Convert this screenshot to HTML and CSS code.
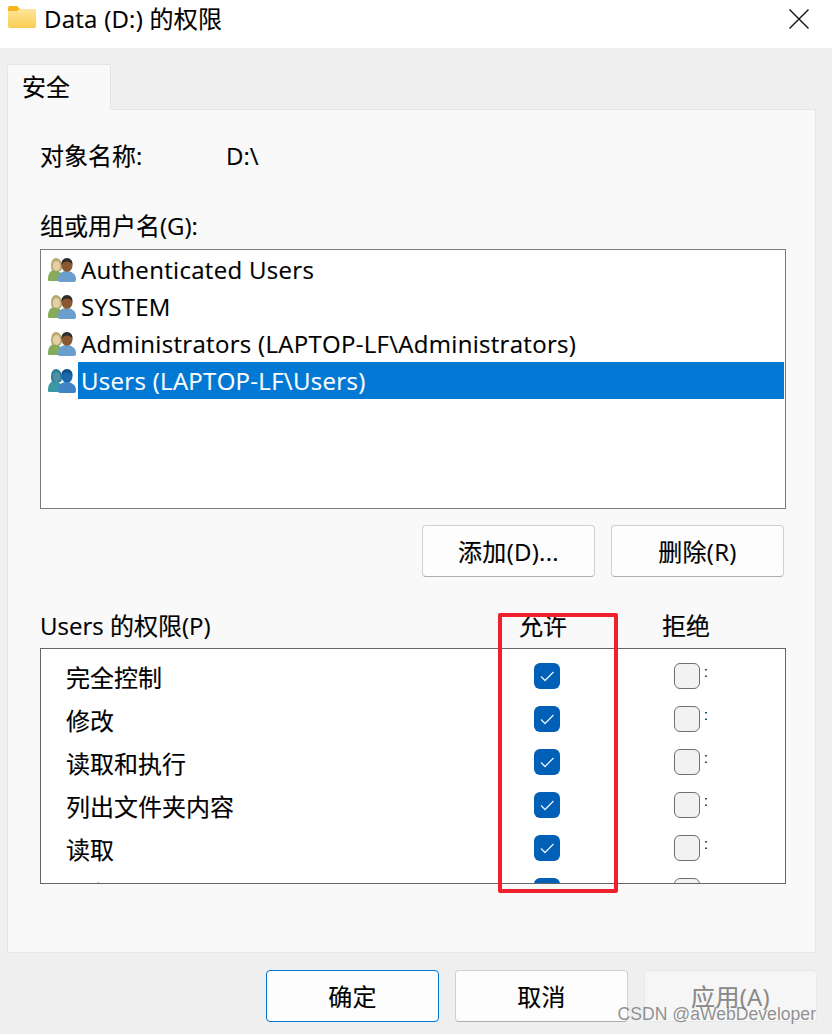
FILE: index.html
```html
<!DOCTYPE html>
<html lang="zh-CN">
<head>
<meta charset="utf-8">
<title>Data (D:) 的权限</title>
<link rel="stylesheet" href="styles.css">
</head>
<body>
<svg class="defs" width="0" height="0" aria-hidden="true">
  <defs>
    <symbol id="people" viewBox="0 0 28 24">
      <path d="M0 21c0-6 3-9 7-9 4 0 7 3 7 9v2H1a1 1 0 0 1-1-1z" fill="#86ab5a"/>
      <path d="M3 8c0-5 2-8 5-8s6 3 6 8c0 2.500-.5 4-1.500 5H4.500C3.500 12 3 10.500 3 8z" fill="#b8a874"/>
      <ellipse cx="8.500" cy="8" rx="3.800" ry="5" fill="#e6cfa6"/>
      <path d="M10 22v-1c0-5 3.500-8 8.500-8S28 16 28 21v1a2 2 0 0 1-2 2H12a2 2 0 0 1-2-2z" fill="#6a9ecd"/>
      <ellipse cx="19" cy="7.500" rx="5.500" ry="6.300" fill="#8a5731"/>
      <path d="M13.500 7c-.5-4 2-7 5.500-7s6 3 5.500 7c-1-2-3-3.500-5.500-3.500S14.500 5 13.500 7z" fill="#2e2d2c"/>
    </symbol>
    <symbol id="people-sel" viewBox="0 0 28 24">
      <path d="M0 21c0-6 3-9 7-9 4 0 7 3 7 9v2H1a1 1 0 0 1-1-1z" fill="#3a98a3"/>
      <path d="M3 8c0-5 2-8 5-8s6 3 6 8c0 2.500-.5 4-1.500 5H4.500C3.500 12 3 10.500 3 8z" fill="#2e7d96"/>
      <ellipse cx="8.500" cy="8" rx="3.800" ry="5" fill="#4f8fa8"/>
      <path d="M10 22v-1c0-5 3.500-8 8.500-8S28 16 28 21v1a2 2 0 0 1-2 2H12a2 2 0 0 1-2-2z" fill="#3e84c6"/>
      <ellipse cx="19" cy="7.500" rx="5.500" ry="6.300" fill="#1b69ab"/>
      <path d="M13.500 7c-.5-4 2-7 5.500-7s6 3 5.500 7c-1-2-3-3.500-5.500-3.500S14.500 5 13.500 7z" fill="#0f4f8c"/>
    </symbol>
    <symbol id="tick" viewBox="0 0 26 26">
      <path d="M7 13.500l4 4L19.500 9" fill="none" stroke="#e8f1fa" stroke-width="1.300"/>
    </symbol>
  </defs>
</svg>
<div class="dialog">
  <header class="titlebar">
    <svg class="folder" viewBox="0 0 28 22" aria-hidden="true">
      <defs>
        <linearGradient id="fold" x1="0" y1="0" x2="0" y2="1">
          <stop offset="0" stop-color="#fde59b"/>
          <stop offset="1" stop-color="#f9cd52"/>
        </linearGradient>
      </defs>
      <path d="M0 2a2 2 0 0 1 2-2h7l3 3h14a2 2 0 0 1 2 2v3H0z" fill="#f6b51e"/>
      <path d="M0 5h9l3-2h14a2 2 0 0 1 2 2v15a2 2 0 0 1-2 2H2a2 2 0 0 1-2-2z" fill="url(#fold)"/>
    </svg>
    <span class="title">Data (D:) 的权限</span>
    <svg class="close" viewBox="0 0 20 20" aria-hidden="true">
      <path d="M0.500 0.500l19 19M19.500 0.500l-19 19" fill="none" stroke="#111" stroke-width="1.400"/>
    </svg>
  </header>

  <main class="body">
    <div class="tabs"><div class="tab">安全</div></div>
    <section class="panel">
      <div class="object"><span class="object-label">对象名称:</span><span>D:\</span></div>
      <div class="group-label">组或用户名(G):</div>
      <ul class="users">
        <li class="user"><svg class="user-icon"><use href="#people"/></svg><span class="user-name">Authenticated Users</span></li>
        <li class="user"><svg class="user-icon"><use href="#people"/></svg><span class="user-name">SYSTEM</span></li>
        <li class="user"><svg class="user-icon"><use href="#people"/></svg><span class="user-name">Administrators (LAPTOP-LF\Administrators)</span></li>
        <li class="user selected"><svg class="user-icon"><use href="#people-sel"/></svg><span class="user-name">Users (LAPTOP-LF\Users)</span></li>
      </ul>
      <div class="user-actions">
        <button class="btn">添加(D)...</button>
        <button class="btn">删除(R)</button>
      </div>
      <div class="perm-head">
        <span class="perm-title">Users 的权限(P)</span>
        <span class="perm-col">允许</span>
        <span class="perm-col">拒绝</span>
      </div>
      <div class="perms">
        <div class="perm-rows">
          <div class="perm"><span class="perm-name">完全控制</span><span class="cell"><span class="box on"><svg><use href="#tick"/></svg></span></span><span class="cell"><span class="box"></span><span class="dots">:</span></span></div>
          <div class="perm"><span class="perm-name">修改</span><span class="cell"><span class="box on"><svg><use href="#tick"/></svg></span></span><span class="cell"><span class="box"></span><span class="dots">:</span></span></div>
          <div class="perm"><span class="perm-name">读取和执行</span><span class="cell"><span class="box on"><svg><use href="#tick"/></svg></span></span><span class="cell"><span class="box"></span><span class="dots">:</span></span></div>
          <div class="perm"><span class="perm-name">列出文件夹内容</span><span class="cell"><span class="box on"><svg><use href="#tick"/></svg></span></span><span class="cell"><span class="box"></span><span class="dots">:</span></span></div>
          <div class="perm"><span class="perm-name">读取</span><span class="cell"><span class="box on"><svg><use href="#tick"/></svg></span></span><span class="cell"><span class="box"></span><span class="dots">:</span></span></div>
          <div class="perm"><span class="perm-name">写入</span><span class="cell"><span class="box on"><svg><use href="#tick"/></svg></span></span><span class="cell"><span class="box"></span><span class="dots">:</span></span></div>
        </div>
        <div class="scrollbar"><div class="thumb"></div></div>
      </div>
    </section>
  </main>

  <footer class="footer">
    <button class="btn primary">确定</button>
    <button class="btn">取消</button>
    <button class="btn disabled">应用(A)</button>
  </footer>
</div>
<div class="highlight"></div>
<div class="watermark">CSDN @aWebDeveloper</div>
</body>
</html>
```
FILE: styles.css
```css
* { box-sizing: border-box; }
html, body { margin: 0; padding: 0; }
body {
  width: 832px;
  height: 1034px;
  overflow: hidden;
  position: relative;
  background: #efefef;
  color: #000;
  font-family: "Open Sans", "Noto Sans CJK SC", sans-serif;
  font-size: 24px;
  -webkit-text-stroke: 0.15px currentColor;
}
.defs { position: absolute; }
.dialog { display: flex; flex-direction: column; height: 1034px; }
.titlebar {
  height: 48px;
  background: #fff;
  display: flex;
  align-items: center;
  padding: 0 23px 0 8px;
  flex: none;
}
.folder { width: 28px; height: 22px; margin: -14px 8px 0 0; flex: none; }
.title { flex: 1; margin-top: -10px; line-height: 32px; white-space: nowrap; letter-spacing: 0.25px; }
.close { width: 20px; height: 20px; margin-top: -10px; flex: none; }
.body { flex: none; padding: 16px 16px 0 7px; }
.tabs { display: flex; height: 45px; }
.tab {
  width: 104px;
  height: 46px;
  padding: 5px 0 0 14px;
  line-height: 34px;
  background: #f9f9f9;
  border: 1px solid #e5e5e5;
  border-bottom: 0;
  border-radius: 2px 2px 0 0;
  position: relative;
  z-index: 1;
}
.panel {
  height: 844px;
  background: #f9f9f9;
  border: 1px solid #e5e5e5;
  padding: 29px 29px 0 32px;
  display: flex;
  flex-direction: column;
}
.object { display: flex; height: 34px; line-height: 34px; }
.object-label { width: 186px; }
.group-label { height: 34px; line-height: 34px; margin-top: 36px; }
.users {
  list-style: none;
  margin: 6px 0 0;
  padding: 1px;
  height: 260px;
  flex: none;
  background: #fff;
  border: 1px solid #7a7a7a;
}
.user { display: flex; align-items: center; height: 37px; }
.user-icon { width: 28px; height: 24px; margin: 0 2px 0 6px; flex: none; }
.user-name { flex: 1; line-height: 37px; padding-left: 3px; white-space: nowrap; letter-spacing: 0.3px; }
.selected .user-name { background: #0078d4; color: #fff; }
.user-actions { display: flex; justify-content: flex-end; gap: 16px; margin: 16px 2px 0 0; }
.btn {
  width: 173px;
  height: 52px;
  padding: 0 0 2px;
  font: inherit;
  letter-spacing: 0.3px;
  color: #000;
  background: #fdfdfd;
  border: 1px solid #d0d0d0;
  border-bottom-color: #aeaeae;
  border-radius: 4px;
}
.primary { border-color: #0078d4; }
.disabled { background: #f6f6f6; border-color: #e8e8e8; color: #888; }
.perm-head { display: flex; height: 34px; line-height: 34px; margin-top: 32px; }
.perm-title { width: 479px; flex: none; }
.perm-col { width: 143px; flex: none; }
.perms {
  height: 236px;
  flex: none;
  margin-top: 5px;
  display: flex;
  overflow: hidden;
  background: #fff;
  border: 1px solid #666;
}
.perm-rows { flex: 1; padding-top: 5px; }
.perm { display: flex; align-items: center; height: 43px; }
.perm-name { width: 493px; height: 43px; align-self: flex-start; padding-left: 25px; line-height: 47px; }
.cell { width: 140px; display: flex; align-items: flex-start; }
.box {
  width: 26px;
  height: 26px;
  flex: none;
  background: #f2f2f2;
  border: 1.500px solid #707070;
  border-radius: 6px;
}
.box.on { background: #0060b8; border: 0; }
.box svg { display: block; width: 26px; height: 26px; }
.dots { font-family: "Liberation Sans", sans-serif; font-size: 14px; line-height: 14px; margin: 2px 0 0 4px; }
.scrollbar { width: 33px; background: #f0f0f0; padding: 33px 7px 0; flex: none; }
.thumb { height: 124px; background: #8a8a8a; }
.footer { display: flex; justify-content: flex-end; gap: 16px; padding: 17px 15px 0 0; }
.highlight {
  position: absolute;
  left: 498px;
  top: 613px;
  width: 120px;
  height: 280px;
  border: 4px solid #f0202c;
  border-radius: 2px;
  pointer-events: none;
}
.watermark {
  position: absolute;
  right: 16px;
  bottom: 9px;
  font-family: "Liberation Sans", sans-serif;
  font-size: 17.6px;
  line-height: 22px;
  color: rgba(110, 110, 110, 0.75);
  -webkit-text-stroke: 0;
  white-space: nowrap;
}
```
